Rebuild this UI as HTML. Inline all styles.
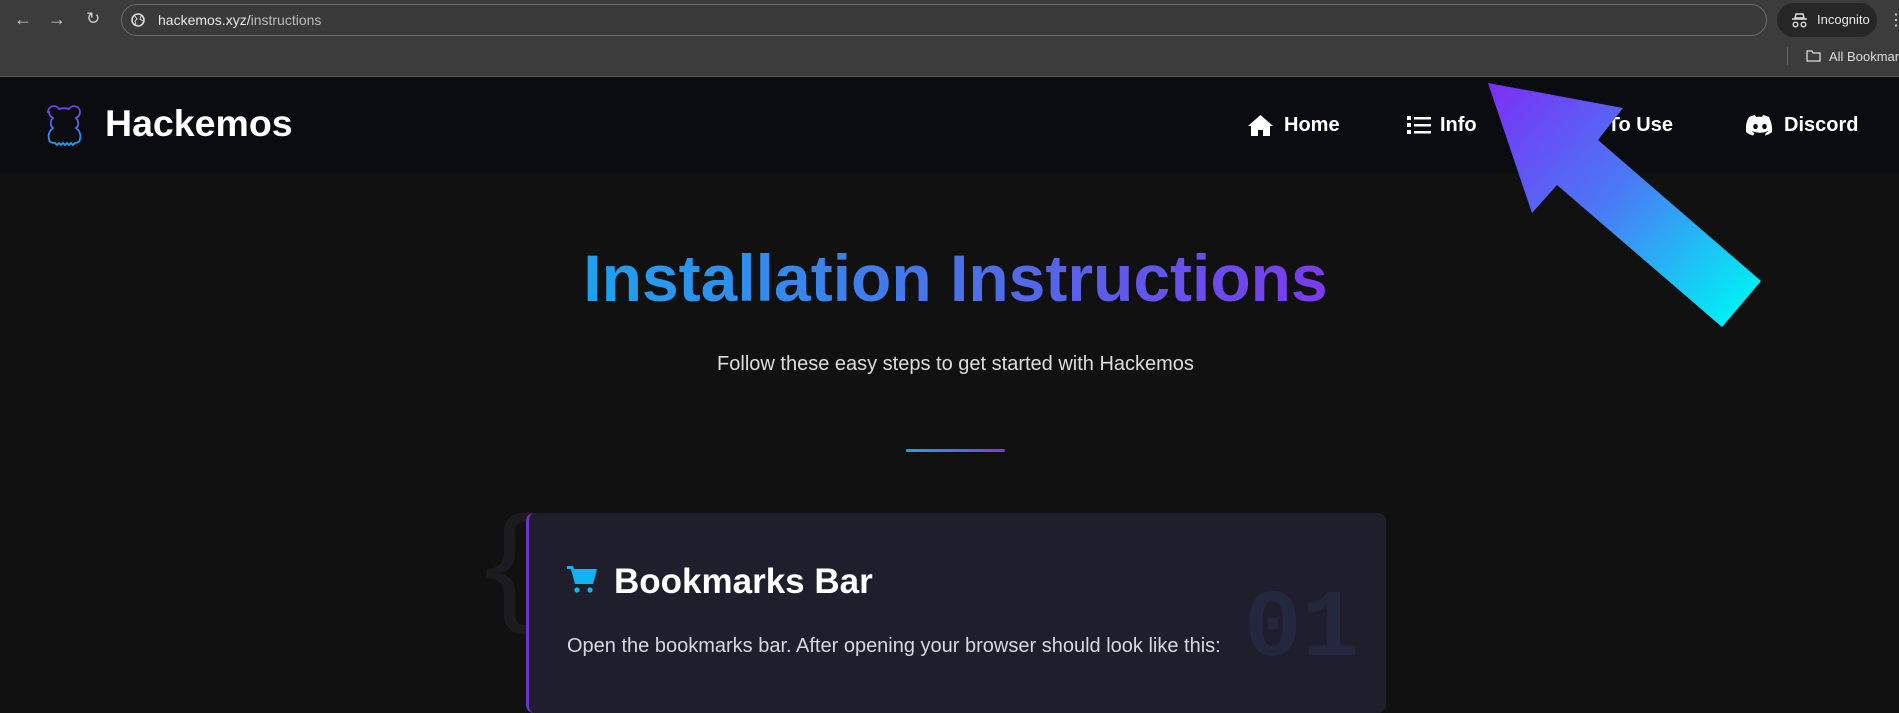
<!DOCTYPE html>
<html><head><meta charset="utf-8"><style>
*{margin:0;padding:0;box-sizing:border-box}
body{width:1899px;height:683px;overflow:hidden;background:#111112;font-family:"Liberation Sans",sans-serif;position:relative}
.chrome{position:absolute;left:0;top:0;width:1899px;height:77px;background:#3c3c3c;border-bottom:1px solid #555}
.url{position:absolute;left:121px;top:4px;width:1646px;height:32px;border:1px solid #6a6a6a;border-radius:16px;background:#3a3a3a}
.url span{position:absolute;left:36px;top:7px;color:#e8e8e8;font-size:14px}
.inc{position:absolute;left:1777px;top:3px;width:100px;height:34px;border-radius:17px;background:#262626;color:#e8e8e8;font-size:13px;padding:9px 0 0 40px}
.nav{position:absolute;left:0;top:78px;width:1899px;height:96px;background:#0b0c10}
.a{position:absolute;color:#fff;font-weight:bold;font-size:20px;top:36px}
h1{position:absolute;top:240px;left:0;width:1911px;text-align:center;font-size:66px;font-weight:bold;white-space:nowrap}
h1 span{background:linear-gradient(90deg,#1ea2ee 0%,#4e6de8 55%,#7c3aed 100%);-webkit-background-clip:text;background-clip:text;color:transparent}
.sub{position:absolute;left:0;width:1911px;text-align:center;top:353px;color:#ddd;font-size:20px}
.div{position:absolute;left:906px;top:449px;width:99px;height:3px;background:linear-gradient(90deg,#1ea2ee,#7c3aed);border-radius:2px}
.card{position:absolute;left:526px;top:513px;width:860px;height:200px;background:#1e1e2d;border-radius:8px;border-left:3px solid #6d34c8}
</style></head><body>
<div class="chrome">
<div style="position:absolute;left:14px;top:9px;color:#ccc;font-size:18px">←</div>
<div style="position:absolute;left:48px;top:9px;color:#ccc;font-size:18px">→</div>
<div style="position:absolute;left:86px;top:9px;color:#ccc;font-size:17px">↻</div>
<div class="url"><svg style="position:absolute;left:9px;top:8px" width="14" height="14" viewBox="0 0 14 14"><circle cx="7" cy="7" r="6" fill="none" stroke="#ddd" stroke-width="1.6"/><path d="M4 3l2 3-2 2 1 4M10 3l-1 3 3 2" stroke="#ddd" fill="none"/></svg><span>hackemos.xyz/<span style="position:static;color:#bbb">instructions</span></span></div>
<div class="inc"><svg style="position:absolute;left:14px;top:10px" width="17" height="15" viewBox="0 0 17 15"><path d="M5 1h7l1 4H4z M1 6h15" stroke="#ddd" stroke-width="1.5" fill="none"/><circle cx="4.5" cy="11.5" r="2.3" stroke="#ddd" stroke-width="1.4" fill="none"/><circle cx="12.5" cy="11.5" r="2.3" stroke="#ddd" stroke-width="1.4" fill="none"/></svg>Incognito</div>
<div style="position:absolute;left:1888px;top:10px;color:#ddd;font-size:16px">⋮</div>
<div style="position:absolute;left:1787px;top:47px;width:1px;height:18px;background:#666"></div>
<svg style="position:absolute;left:1806px;top:50px" width="15" height="12"><path d="M1 1h5l1 2h7v8H1z" fill="none" stroke="#ddd" stroke-width="1.3"/></svg>
<div style="position:absolute;left:1829px;top:49px;color:#ddd;font-size:13px;white-space:nowrap">All Bookmarks</div>
</div>
<div class="nav">
<svg style="position:absolute;left:42px;top:24px" width="44" height="50" viewBox="0 0 44 50"><defs><linearGradient id="lg" x1="0" y1="0" x2="0" y2="1"><stop offset="0" stop-color="#7c3aed"/><stop offset="1" stop-color="#1ea2ee"/></linearGradient></defs><path d="M6 10c0-6 8-8 11-3 3-1 7-1 10 0 3-5 11-3 11 3 0 3-2 5-4 6 3 3 3 8 0 10 4 3 5 7 4 11 0 3-3 4-5 4l-2 2-2-2-2 2-2-2-2 2-2-2-2 2-2-2-2 2-2-2c-3 0-6-1-6-4-1-4 0-8 4-11-3-2-3-7 0-10-2-1-4-3-4-6z" fill="none" stroke="url(#lg)" stroke-width="1.8"/></svg>
<div class="a" style="left:105px;top:24px;font-size:37.5px">Hackemos</div>
<svg style="position:absolute;left:1247px;top:36px" width="27" height="23" viewBox="0 0 27 23"><path d="M13.5 1L1 12h3v10h7v-6h5v6h7V12h3z" fill="#fff"/></svg>
<div class="a" style="left:1284px">Home</div>
<svg style="position:absolute;left:1407px;top:38px" width="24" height="19"><g fill="#fff"><rect x="0" y="0" width="4" height="4"/><rect x="0" y="7" width="4" height="4"/><rect x="0" y="14" width="4" height="4"/><rect x="7" y="1" width="17" height="2.5"/><rect x="7" y="8" width="17" height="2.5"/><rect x="7" y="15" width="17" height="2.5"/></g></svg>
<div class="a" style="left:1440px">Info</div>
<div class="a" style="left:1560px">How To Use</div>
<svg style="position:absolute;left:1746px;top:37px" width="28" height="21" viewBox="0 0 28 21"><path d="M23 2C21 1 19 .5 17 0l-1 2c-2-.3-4-.3-6 0L9 0C7 .5 5 1 3 2 0 7-.5 12 0 17c2.5 2 5 3 7 3.5l1.5-2.5-2.5-1.2.6-.5c5 2 10 2 15 0l.6.5-2.5 1.2L19 20.5c2-.5 4.5-1.5 7-3.5.5-6-1-11-3-15z" fill="#fff"/><ellipse cx="9.5" cy="11.5" rx="2.3" ry="2.6" fill="#0b0c10"/><ellipse cx="18.5" cy="11.5" rx="2.3" ry="2.6" fill="#0b0c10"/></svg>
<div class="a" style="left:1784px">Discord</div>
</div>
<h1><span>Installation Instructions</span></h1>
<div class="sub">Follow these easy steps to get started with Hackemos</div>
<div class="div"></div>
<div style="position:absolute;left:472px;top:500px;color:#1c1c20;font-size:130px;font-family:'Liberation Mono',monospace">{</div>
<div class="card">
<div style="position:absolute;left:715px;top:62px;font-family:'Liberation Mono',monospace;font-weight:bold;font-size:96px;color:#24283f">01</div>
<svg style="position:absolute;left:38px;top:53px" width="30" height="28" viewBox="0 0 30 28"><path d="M0 0h6l1 3h23l-4 15H8L4 3H0z" fill="#10b4f0"/><circle cx="10" cy="24" r="2.6" fill="#10b4f0"/><circle cx="23" cy="24" r="2.6" fill="#10b4f0"/></svg>
<div style="position:absolute;left:85px;top:49px;color:#fff;font-weight:bold;font-size:35px">Bookmarks Bar</div>
<div style="position:absolute;left:38px;top:122px;color:#d8d8e0;font-size:20px">Open the bookmarks bar. After opening your browser should look like this:</div>
</div>
<svg style="position:absolute;left:0;top:0" width="1899" height="683"><defs><linearGradient id="ag" x1="1488" y1="83" x2="1740" y2="310" gradientUnits="userSpaceOnUse"><stop offset="0" stop-color="#7b2ff5"/><stop offset="0.5" stop-color="#4a7af5"/><stop offset="1" stop-color="#00f0f5"/></linearGradient></defs><polygon points="1488,83 1623,108 1598,140 1761,281 1722,327 1557,185 1532,213" fill="url(#ag)"/></svg>
</body></html>
